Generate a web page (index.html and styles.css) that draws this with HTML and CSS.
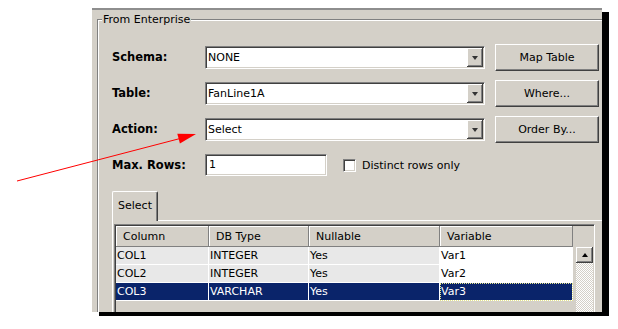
FILE: index.html
```html
<!DOCTYPE html>
<html lang="en">
<head>
  <meta charset="UTF-8">
  <title>From Enterprise</title>
  <link rel="stylesheet" href="styles.css">
</head>
<body>

  <div class="page">
    <div class="panel">
      <fieldset class="group">
        <legend>From Enterprise</legend>
        <div class="inner">

          <div class="form">
            <label class="lbl">Schema:</label>
            <div class="combo"><span class="combo-text">NONE</span><span class="drop"></span></div>
            <button class="btn">Map Table</button>

            <label class="lbl">Table:</label>
            <div class="combo"><span class="combo-text">FanLine1A</span><span class="drop"></span></div>
            <button class="btn">Where...</button>

            <label class="lbl">Action:</label>
            <div class="combo"><span class="combo-text">Select</span><span class="drop"></span></div>
            <button class="btn">Order By...</button>

            <label class="lbl">Max. Rows:</label>
            <div class="rows-line">
              <div class="edit">1</div>
              <span class="check"></span>
              <span class="check-text">Distinct rows only</span>
            </div>
          </div>

          <div class="tabs">
            <div class="tab">Select</div>
          </div>

          <div class="tabpage">
            <div class="grid">
              <table>
                <tr>
                  <th class="c1">Column</th>
                  <th class="c2">DB Type</th>
                  <th class="c3">Nullable</th>
                  <th class="c4">Variable</th>
                </tr>
                <tr>
                  <td>COL1</td><td>INTEGER</td><td>Yes</td><td class="var">Var1</td>
                </tr>
                <tr>
                  <td>COL2</td><td>INTEGER</td><td>Yes</td><td class="var">Var2</td>
                </tr>
                <tr class="sel">
                  <td>COL3</td><td>VARCHAR</td><td>Yes</td><td class="var focus">Var3</td>
                </tr>
              </table>
              <div class="vscroll">
                <div class="sbtn"><span class="up"></span></div>
                <div class="track"></div>
              </div>
            </div>
          </div>

        </div>
      </fieldset>
    </div>

    <!-- red callout arrow -->
    <svg class="arrow" width="618" height="329" viewBox="0 0 618 329">
      <line x1="17" y1="181" x2="182" y2="138" stroke="#ff0000" stroke-width="1"/>
      <polygon points="196,134 177.3,133.8 179.9,143.4" fill="#ff0000"/>
    </svg>
  </div>

</body>
</html>
```

FILE: styles.css
```css
body {
  margin: 0;
  background: #fff;
  font-family: 'DejaVu Sans', sans-serif;
  font-size: 11px;
  color: #000;
}

.page {
  position: relative;
  height: 329px;
  padding: 8px 0 0 92px;
  box-sizing: border-box;
}

.panel {
  width: 510px;
  height: 302px;
  background: #d4d0c8;
  border-top: 2px solid #8e8e8e;
  box-shadow: 7px 4px 0 #000;
  overflow: hidden;
}

.group {
  margin: 3px 0 0 5px;
  padding: 0;
  border: 0;
  border-top: 1px solid #808080;
  border-left: 1px solid #808080;
  box-shadow: inset 1px 1px 0 #fff;
  min-width: 0;
  height: 320px;
}

.group legend {
  margin-left: 4px;
  padding: 0 1px;
  line-height: 13px;
  background: #d4d0c8;
}

.inner {
  padding: 13px 0 0 14px;
}

.form {
  display: grid;
  grid-template-columns: 93px 290px 104px;
  grid-auto-rows: 36px;
  align-items: center;
}

.lbl {
  font-weight: bold;
  font-size: 11.5px;
}

.combo {
  width: 280px;
  height: 23px;
  box-sizing: border-box;
  display: flex;
  align-items: center;
  background: #fff;
  border: 1px solid;
  border-color: #808080 #fff #fff #808080;
  box-shadow: inset 1px 1px 0 #404040, inset -1px -1px 0 #d4d0c8;
  padding: 1px;
}

.combo-text {
  flex: 1;
  padding-left: 1px;
}

.drop {
  width: 16px;
  height: 19px;
  background: #d4d0c8;
  box-shadow: inset -1px -1px 0 #404040, inset 1px 1px 0 #fff, inset -2px -2px 0 #808080;
  display: flex;
  align-items: center;
  justify-content: center;
}

.drop::after {
  content: '';
  border-left: 3.5px solid transparent;
  border-right: 3.5px solid transparent;
  border-top: 4px solid #333;
  margin: 1px 1px 0 0;
}

.btn {
  width: 104px;
  height: 27px;
  font-family: inherit;
  font-size: 11px;
  color: #000;
  background: #d4d0c8;
  border: 1px solid;
  border-color: #fff #404040 #404040 #fff;
  box-shadow: inset -1px -1px 0 #808080;
  padding: 0;
}

.rows-line {
  grid-column: 2 / 4;
  display: flex;
  align-items: center;
}

.edit {
  width: 122px;
  height: 22px;
  box-sizing: border-box;
  background: #fff;
  border: 1px solid;
  border-color: #808080 #fff #fff #808080;
  box-shadow: inset 1px 1px 0 #404040, inset -1px -1px 0 #d4d0c8;
  padding: 0 3px;
  line-height: 20px;
}

.check {
  width: 13px;
  height: 13px;
  box-sizing: border-box;
  margin-left: 16px;
  background: #fff;
  border: 1px solid;
  border-color: #808080 #fff #fff #808080;
  box-shadow: inset 1px 1px 0 #404040, inset -1px -1px 0 #d4d0c8;
}

.check-text {
  margin-left: 6px;
}

.tabs {
  display: flex;
  margin-top: 8px;
}

.tab {
  position: relative;
  width: 46px;
  height: 30px;
  box-sizing: border-box;
  margin-bottom: -1px;
  background: #d4d0c8;
  border-top: 1px solid #fff;
  border-left: 1px solid #fff;
  border-right: 1px solid #404040;
  box-shadow: inset -1px 0 0 #808080;
  border-radius: 2px 2px 0 0;
  text-align: center;
  line-height: 27px;
}

.tabpage {
  border-top: 1px solid #fff;
  border-left: 1px solid #fff;
  padding: 3px 0 0 1px;
}

.grid {
  width: 481px;
  height: 120px;
  box-sizing: border-box;
  display: flex;
  align-items: flex-start;
  background: #d4d0c8;
  border: 1px solid;
  border-color: #808080 #fff #fff #808080;
  box-shadow: inset 1px 1px 0 #404040, inset -1px -1px 0 #d4d0c8;
  padding: 1px;
}

table {
  border-collapse: separate;
  border-spacing: 0;
  table-layout: fixed;
  width: 457px;
}

th {
  height: 21px;
  box-sizing: border-box;
  background: #d4d0c8;
  font-weight: normal;
  text-align: left;
  padding: 0 0 0 7px;
  border-right: 1px solid #808080;
  border-bottom: 1px solid #808080;
  box-shadow: inset 1px 1px 0 #fff;
}

.c1 { width: 93px; }
.c2 { width: 100px; }
.c3 { width: 131px; }
.c4 { width: 133px; }

td {
  height: 18px;
  box-sizing: border-box;
  background: #e8e8e8;
  padding: 0 0 0 1px;
  border-right: 1px solid #fff;
  border-bottom: 1px solid #fff;
  white-space: nowrap;
}

td.var {
  background: #fff;
}

tr.sel td {
  background: #0a246a;
  color: #fff;
}

td.focus {
  outline: 1px dotted #e6e68c;
  outline-offset: -1px;
}

.vscroll {
  width: 17px;
  height: 100px;
  margin: 21px 0 0 3px;
  display: flex;
  flex-direction: column;
}

.sbtn {
  height: 16px;
  background: #d4d0c8;
  box-shadow: inset -1px -1px 0 #404040, inset 1px 1px 0 #fff, inset -2px -2px 0 #808080;
  display: flex;
  align-items: center;
  justify-content: center;
}

.up {
  border-left: 3.5px solid transparent;
  border-right: 3.5px solid transparent;
  border-bottom: 4px solid #000;
  margin-bottom: 1px;
}

.track {
  flex: 1;
  background-color: #fff;
  background-image: repeating-conic-gradient(#d4d0c8 0 25%, #fff 0 50%);
  background-size: 2px 2px;
}

.arrow {
  position: absolute;
  left: 0;
  top: 0;
  pointer-events: none;
}
```
